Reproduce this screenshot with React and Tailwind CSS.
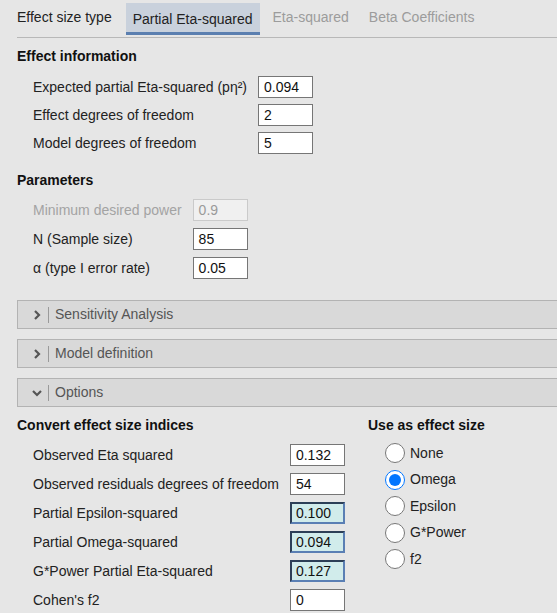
import React, { useState } from "react";

const Field = ({ value, kind = "normal" }) => {
  const base = "w-[55px] h-[22px] flex items-center leading-none";
  if (kind === "computed") {
    return (
      <div className={`${base} pl-[4px] bg-[#d1eceb] border-2 border-t-[#2c3f57] border-l-[#2c3f57] border-r-[#5a7fb4] border-b-[#5a7fb4] text-[#111]`}>
        {value}
      </div>
    );
  }
  if (kind === "disabled") {
    return (
      <div className={`${base} pl-[5px] bg-[#f0f0f0] border border-[#cacaca] text-[#9a9a9a]`}>
        {value}
      </div>
    );
  }
  return (
    <div className={`${base} pl-[5px] bg-white border border-[#767676] text-[#111]`}>
      {value}
    </div>
  );
};

const Rows = ({ rows, gap }) => (
  <div className={`grid grid-cols-[auto_55px] gap-x-[11px] ${gap} pl-[16px] w-fit`}>
    {rows.map((r) => (
      <React.Fragment key={r.label}>
        <div className={`h-[22px] flex items-center ${r.kind === "disabled" ? "text-[#a3a3a3]" : "text-[#222]"}`}>
          {r.label}
        </div>
        <Field value={r.value} kind={r.kind} />
      </React.Fragment>
    ))}
  </div>
);

const Chevron = ({ open }) => (
  <svg width="12" height="12" viewBox="0 0 12 12" className="shrink-0">
    {open ? (
      <path d="M2 4 L6 8 L10 4" fill="none" stroke="#555" strokeWidth="2.2" />
    ) : (
      <path d="M4 2 L8 6 L4 10" fill="none" stroke="#555" strokeWidth="2.2" />
    )}
  </svg>
);

const Panel = ({ title, open, className = "" }) => (
  <div className={`h-[29px] mr-[-40px] bg-[#d9d9d9] border border-[#b3b3b3] flex items-center ${className}`}>
    <div className="pl-[13px] w-[30px] flex items-center">
      <Chevron open={open} />
    </div>
    <div className="h-[16px] w-px bg-[#9a9a9a]" />
    <div className="pl-[6px] text-[#555]">{title}</div>
  </div>
);

export default function App() {
  const [useAs, setUseAs] = useState("Omega");
  const tabs = ["Partial Eta-squared", "Eta-squared", "Beta Coefficients"];

  return (
    <div
      className="h-[613px] w-[557px] overflow-hidden bg-[#e6e6e6] pl-[17px] text-[14px]"
      style={{ fontFamily: "'Liberation Sans', Arial, sans-serif" }}
    >
      {/* tab bar */}
      <div className="h-[38px] mr-[-40px] border-b border-[#b8b8b8] flex items-start pt-[3px]">
        <div className="h-[29px] flex items-center text-[#222] mr-[14px]">Effect size type</div>
        <div className="flex gap-[6px]">
          {tabs.map((t, i) => (
            <div
              key={t}
              className={
                i === 0
                  ? "h-[32px] px-[7px] flex items-center bg-[#c9d1dc] border-b-[3px] border-[#5b7fb0] text-[#222]"
                  : "h-[29px] px-[7px] flex items-center text-[#9c9c9c]"
              }
            >
              <span className={i === 0 ? "mt-[3px]" : ""}>{t}</span>
            </div>
          ))}
        </div>
      </div>

      <div className="mt-[8px] leading-[20px] font-bold text-[#111]">Effect information</div>
      <div className="mt-[10px]">
        <Rows
          gap="gap-y-[6px]"
          rows={[
            { label: "Expected partial Eta-squared (pη²)", value: "0.094" },
            { label: "Effect degrees of freedom", value: "2" },
            { label: "Model degrees of freedom", value: "5" },
          ]}
        />
      </div>

      <div className="mt-[16px] leading-[20px] font-bold text-[#111]">Parameters</div>
      <div className="mt-[9px]">
        <Rows
          gap="gap-y-[7px]"
          rows={[
            { label: "Minimum desired power", value: "0.9", kind: "disabled" },
            { label: "N (Sample size)", value: "85" },
            { label: "α (type I error rate)", value: "0.05" },
          ]}
        />
      </div>

      <Panel title="Sensitivity Analysis" className="mt-[21px]" />
      <Panel title="Model definition" className="mt-[10px]" />
      <Panel title="Options" open className="mt-[10px]" />

      <div className="flex mt-[8px]">
        <div className="w-[351px]">
          <div className="leading-[20px] font-bold text-[#111]">Convert effect size indices</div>
          <div className="mt-[9px]">
            <Rows
              gap="gap-y-[7px]"
              rows={[
                { label: "Observed Eta squared", value: "0.132" },
                { label: "Observed residuals degrees of freedom", value: "54" },
                { label: "Partial Epsilon-squared", value: "0.100", kind: "computed" },
                { label: "Partial Omega-squared", value: "0.094", kind: "computed" },
                { label: "G*Power Partial Eta-squared", value: "0.127", kind: "computed" },
                { label: "Cohen's f2", value: "0" },
              ]}
            />
          </div>
        </div>
        <div>
          <div className="leading-[20px] font-bold text-[#111]">Use as effect size</div>
          <div className="mt-[5px] pl-[17px] flex flex-col">
            {["None", "Omega", "Epsilon", "G*Power", "f2"].map((o) => (
              <label key={o} className="h-[26.5px] flex items-center gap-[5px] text-[#222]">
                <input
                  type="radio"
                  name="useas"
                  checked={useAs === o}
                  onChange={() => setUseAs(o)}
                  className="m-0 w-[20px] h-[20px]"
                />
                {o}
              </label>
            ))}
          </div>
        </div>
      </div>
    </div>
  );
}
